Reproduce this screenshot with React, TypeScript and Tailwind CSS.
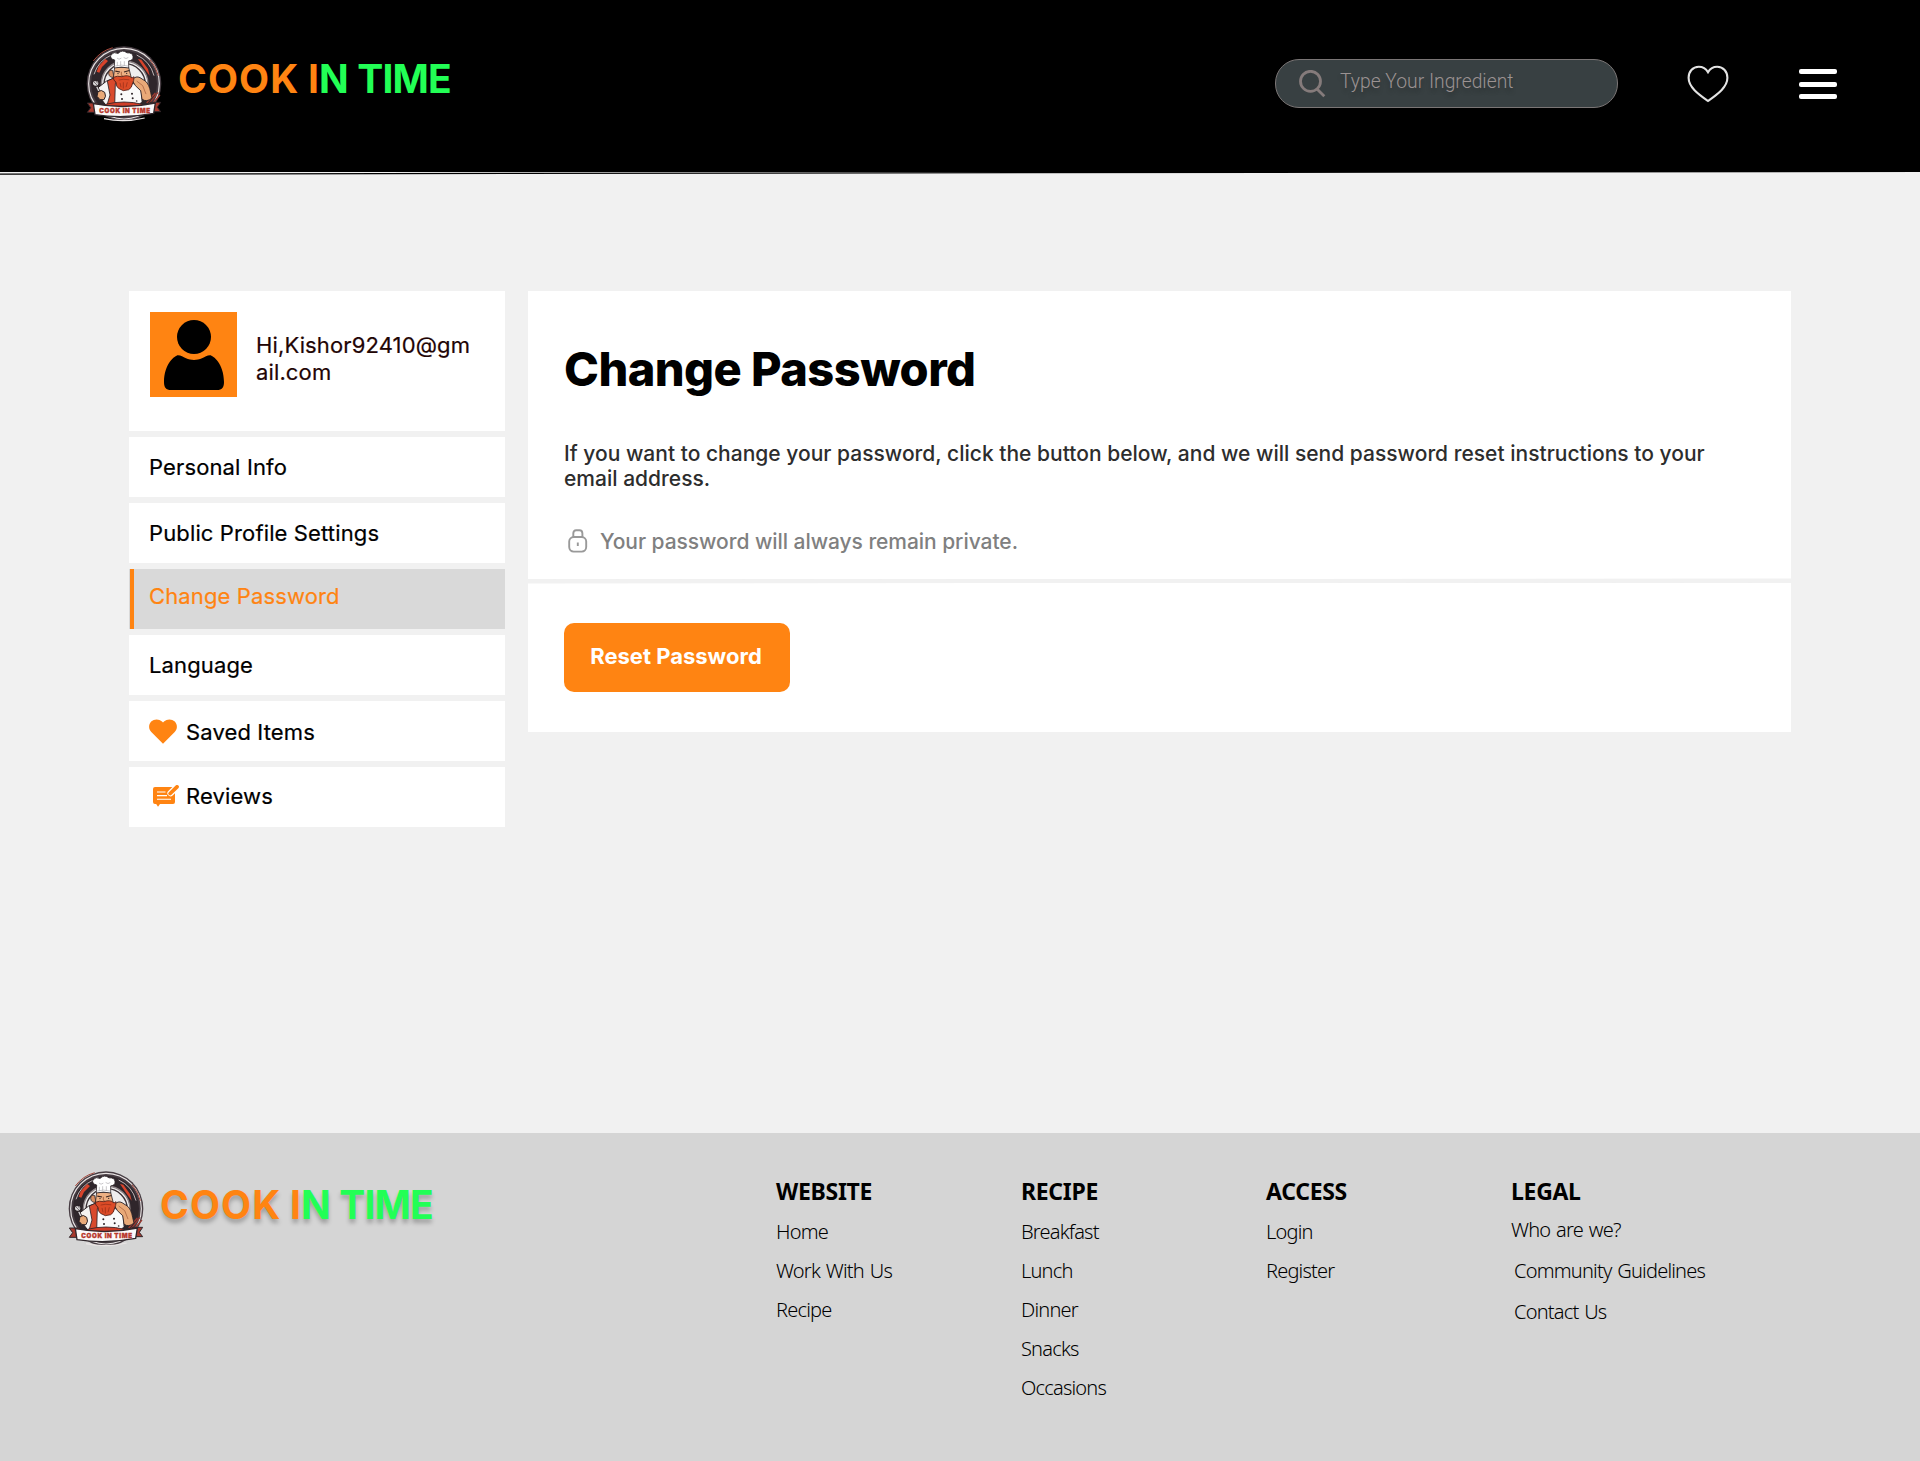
import type { ReactNode } from "react";

function ChefLogo({ className }: { className: string }) {
  return (
    <svg viewBox="0 0 252 264" className={`h-[88px] w-[84px] shrink-0 ${className}`} aria-hidden="true">
      {/* badge rings */}
      <circle cx="126" cy="128" r="112" fill="#463c42" />
      <circle cx="126" cy="128" r="106" fill="none" stroke="#e9e4e4" strokeWidth="3.5" />
      <circle cx="126" cy="128" r="99" fill="#2f262b" />
      <path d="M36 100A94 94 0 0 1 88 42" fill="none" stroke="#bfb4b6" strokeWidth="3" />
      <path d="M164 42A94 94 0 0 1 216 104" fill="none" stroke="#bfb4b6" strokeWidth="3" />
      <circle cx="128" cy="130" r="70" fill="#efeeee" />
      <circle cx="128" cy="130" r="70" fill="none" stroke="#8d8386" strokeWidth="4" />
      <circle cx="128" cy="130" r="62" fill="none" stroke="#3a3035" strokeWidth="4" />
      <path d="M44 92L50 76L70 54L78 60L60 78L52 95Z" fill="#d8432b" />
      <path d="M168 54L178 56L198 84L203 104L190 86Z" fill="#d8432b" />
      <path d="M34 60Q56 30 92 20" fill="none" stroke="#a5483c" strokeWidth="3" />
      <path d="M204 56Q222 76 229 104" fill="none" stroke="#a5483c" strokeWidth="3" />
      {/* forks on the right rim */}
      <path d="M200 190L228 154M206 194L234 162M194 186L220 156" fill="none" stroke="#9c3a30" strokeWidth="4" />
      {/* jacket */}
      <g transform="translate(0 12)">
        <path d="M48 128L74 108L100 98L112 186L74 184L56 160Z" fill="#f5f3f2" stroke="#2b2226" strokeWidth="3" />
        <path d="M76 108L102 96L108 184H74L84 150Z" fill="#d94a2d" stroke="#2b2226" strokeWidth="2.5" />
        <path d="M100 116L158 116L178 138L180 170L166 184H98Z" fill="#fafafa" stroke="#2b2226" strokeWidth="2.5" />
      </g>
      {/* raised arm */}
      <g transform="translate(0 42) scale(1 .85)">
        <path d="M150 88Q162 72 174 80L190 92Q202 104 206 132L210 152Q194 168 180 156L176 126L160 108Z" fill="#e9a978" stroke="#2b2226" strokeWidth="3" />
        <path d="M164 92L182 108L192 138" fill="none" stroke="#a8623e" strokeWidth="2.5" />
      </g>
      <g transform="translate(0 29) scale(1 .93)">
        {/* face */}
        <path d="M92 64Q80 60 80 74Q82 88 96 86Z" fill="#d98f62" stroke="#2b2226" strokeWidth="2.5" />
        <path d="M98 54H140L148 88L134 106H104L94 88Z" fill="#edb083" stroke="#2b2226" strokeWidth="2.5" />
        <path d="M100 66L114 69M126 69L142 64" stroke="#3a2420" strokeWidth="3.5" />
        <path d="M118 68V80L124 82" fill="none" stroke="#a8623e" strokeWidth="3" />
        <circle cx="108" cy="74" r="2" fill="#2b2226" />
        <circle cx="134" cy="73" r="2" fill="#2b2226" />
        {/* beard */}
        <path d="M94 86Q106 80 120 84Q138 76 150 88L156 84Q156 98 152 104Q150 120 140 126L124 129L110 122Q102 116 102 102Q94 96 94 86Z" fill="#dc4b27" stroke="#4a1d18" strokeWidth="2.5" />
        <path d="M110 95Q122 90 142 94M114 104L117 118M124 102V122M136 102L132 118" fill="none" stroke="#8c2a18" strokeWidth="2" />
        {/* chef hat */}
        <path d="M98 30Q82 26 87 13Q96 2 108 9Q121 -5 135 7Q152 6 153 19Q155 31 140 33L140 56Q118 50 97 56Z" fill="#fff" stroke="#2b2226" strokeWidth="2.5" />
        <path d="M106 36V50M116 34V49M127 34V49M97 50Q118 43 140 50M105 24Q111 31 118 24M125 22Q132 29 139 22" fill="none" stroke="#aba7ac" strokeWidth="2" />
      </g>
      {/* buttons */}
      <g fill="#2b2226">
        <circle cx="118" cy="160" r="3" />
        <circle cx="150" cy="158" r="3" />
        <circle cx="120" cy="174" r="3" />
        <circle cx="152" cy="172" r="3" />
        <circle cx="164" cy="180" r="2.5" />
      </g>
      {/* spoon hand */}
      <path d="M42 132L54 158" stroke="#2b2226" strokeWidth="8" />
      <path d="M42 132L54 158" stroke="#d9d6d7" strokeWidth="4" />
      <ellipse cx="41" cy="127" rx="10" ry="9" fill="#d9d6d7" stroke="#2b2226" strokeWidth="4" />
      <path d="M35 122L45 132M41 119L47 127" stroke="#4a4146" strokeWidth="2" />
      <path d="M48 152Q58 144 68 154Q74 166 66 176L54 176L45 166Z" fill="#e9a978" stroke="#2b2226" strokeWidth="3" />
      <path d="M70 190Q126 176 182 190L176 204H72Z" fill="#cf3d27" stroke="#2b2226" strokeWidth="2.5" />
      {/* ribbon */}
      <path d="M16 186H48V214H16L26 200Z" fill="#a8392d" stroke="#2f262b" strokeWidth="3" />
      <path d="M236 184H204V212H236L226 199Z" fill="#a8392d" stroke="#2f262b" strokeWidth="3" />
      <path d="M34 188Q126 206 220 186L215 217Q126 234 39 221Z" fill="#fbfafa" stroke="#2f262b" strokeWidth="4" />
      <path d="M66 233Q126 246 188 231" fill="none" stroke="#e9e4e4" strokeWidth="3.5" />
      <text
        x="128"
        y="215"
        textAnchor="middle"
        textLength="152"
        lengthAdjust="spacing"
        fill="#b8382c"
        stroke="#b8382c"
        strokeWidth="1"
        className="font-['Inter'] text-[18.5px] font-black"
      >
        COOK IN TIME
      </text>
    </svg>
  );
}

function Wordmark({ className }: { className: string }) {
  return (
    <div className={`text-[39px] leading-[48px] font-bold whitespace-nowrap ${className}`}>
      <span className="tracking-[1.1px] text-[#ff8412] [word-spacing:-1.7px]">COOK </span>
      <span className="text-[#ff8412]">I</span>
      <span className="tracking-[-0.8px] text-[#22ff55] [word-spacing:0.8px]">N TIME</span>
    </div>
  );
}

function MenuRow({ children }: { children: ReactNode }) {
  return <li className="flex h-[60px] items-center bg-white pl-[20px] text-black">{children}</li>;
}

const linkClass = "block leading-[39px]";

function FooterColumn({ title, children }: { title: string; children: ReactNode }) {
  return (
    <div className="w-[245px]">
      <h2 className="mb-[5.5px] text-[23px] leading-[30px] font-bold tracking-[-0.3px]">{title}</h2>
      <div className="text-[20px] font-light tracking-[-0.8px] whitespace-nowrap [word-spacing:1.4px]">{children}</div>
    </div>
  );
}

function Links({ items }: { items: string[] }) {
  return (
    <>
      {items.map((item) => (
        <a key={item} className={linkClass}>
          {item}
        </a>
      ))}
    </>
  );
}

export default function App() {
  return (
    <div className="flex h-[1461px] w-[1920px] flex-col overflow-hidden bg-[#f1f1f1] font-['Inter',sans-serif]">
      <header className="relative flex h-[172px] shrink-0 items-start bg-black">
        <ChefLogo className="mt-[41px] ml-[82px]" />
        <Wordmark className="mt-[55px] ml-[12px]" />
        <div className="mt-[59px] mr-[69px] ml-auto flex h-[49px] w-[343px] items-center rounded-[24px] border border-[#7a7575] bg-[#384042] pl-[23px]">
          <svg viewBox="0 0 27 28" className="h-[28px] w-[27px]" fill="none" stroke="#857b7b" strokeWidth="2.8">
            <circle cx="11.5" cy="11.3" r="10" />
            <path d="M18 19L25.3 26.3" />
          </svg>
          <span className="mb-[2px] ml-[14px] font-['Roboto'] text-[19.3px] font-light text-[#9b9292] [text-shadow:0_4px_4px_rgba(0,0,0,0.25)]">
            Type Your Ingredient
          </span>
        </div>
        <svg viewBox="0 0 42 38" className="mt-[65px] mr-[70px] h-[38px] w-[42px]" fill="none" stroke="#e3e3e3" strokeWidth="2.1">
          <path d="M21 7.2C18.8 3.5 15.6 1.8 11.8 1.8C5.6 1.8 1.6 6.6 1.6 12.8C1.6 22.3 11.5 29.2 21 36C30.5 29.2 40.4 22.3 40.4 12.8C40.4 6.6 36.4 1.8 30.2 1.8C26.4 1.8 23.2 3.5 21 7.2Z" />
        </svg>
        <div className="mt-[69px] mr-[83px] flex w-[38px] flex-col gap-[7.4px]">
          <div className="h-[5.2px] rounded-[2px] bg-white" />
          <div className="h-[5.2px] rounded-[2px] bg-white" />
          <div className="h-[5.2px] rounded-[2px] bg-white" />
        </div>
        <svg viewBox="0 0 1920 6" className="absolute top-[170px] left-0 h-[6px] w-[1920px]">
          <path d="M0 4.2L1920 1.4" stroke="black" strokeWidth="1.2" />
        </svg>
      </header>

      <main className="flex grow items-start gap-[23px] pt-[119px] pl-[129px]">
        <aside className="w-[376px] text-[22px] font-normal tracking-[0.13px] [-webkit-text-stroke:0.2px]">
          <div className="flex h-[140px] bg-white pt-[21px] pl-[21px]">
            <div className="h-[85px] w-[87px] shrink-0 bg-[#ff8412]">
              <svg viewBox="0 0 87 85" className="h-[85px] w-[87px]" fill="black">
                <circle cx="44" cy="25" r="17" />
                <path d="M28 43.3C31 43.3 33 45 36 46.3C41 48.4 47 48.4 52 46.3C55 45 57 43.3 60 43.3C63 43.3 74 52 74 70C74 75.5 72 78 67 78H21C16 78 14 75.5 14 70C14 52 25 43.3 28 43.3Z" />
              </svg>
            </div>
            <p className="mt-[20px] ml-[19px] w-[222px] leading-[27px] break-all text-[#1f0505]">Hi,Kishor92410@gmail.com</p>
          </div>
          <ul className="mt-[6px] flex flex-col gap-[6px]">
            <MenuRow>Personal Info</MenuRow>
            <MenuRow>Public Profile Settings</MenuRow>
            <li className="flex h-[60px] bg-[#d9d9d9] pl-px text-[#ff8412]">
              <span className="h-full w-[4px] bg-[#ff8412]" />
              <span className="ml-[15px] h-[54px] leading-[54px]">Change Password</span>
            </li>
            <MenuRow>Language</MenuRow>
            <MenuRow>
              <svg viewBox="0 0 28 25" className="mr-[9px] h-[25px] w-[28px]" fill="#ff8412">
                <path d="M14 24.8L2.3 13C-.6 10-.6 5.5 2.2 2.6C5.2-.3 10-.3 13 2.6L14 3.6L15 2.6C18-.3 22.8-.3 25.8 2.6C28.6 5.5 28.6 10 25.7 13Z" />
              </svg>
              <span className="mt-[2px]">Saved Items</span>
            </MenuRow>
            <MenuRow>
              <svg viewBox="0 0 26 22" className="mr-[7px] mb-[2px] ml-[4px] h-[22px] w-[26px]">
                <path d="M2 2H20Q22 2 22 4V17Q22 19 20 19H7L5 21.8L3.2 19H2Q0 19 0 17V4Q0 2 2 2Z" fill="#ff8412" />
                <path d="M4 7H12.5M4 10.6H14M4 14.3H18" stroke="white" strokeWidth="1.1" />
                <path d="M17.5 8.2L24 1.8" stroke="white" strokeWidth="6.2" strokeLinecap="round" />
                <path d="M17.2 8.5L24 1.9" stroke="#ff8412" strokeWidth="3.8" strokeLinecap="round" />
              </svg>
              <span className="mb-[2px]">Reviews</span>
            </MenuRow>
          </ul>
        </aside>

        <section className="w-[1263px]">
          <div className="h-[288px] bg-white pt-[49px] pl-[36px]">
            <h1 className="text-[47px] leading-[58px] font-extrabold tracking-[-0.55px] text-black">Change Password</h1>
            <p className="mt-[43px] w-[1160px] text-[21px] leading-[25px] font-medium tracking-[0.01px] text-[#2d2d2d]">
              If you want to change your password, click the button below, and we will send password reset instructions to
              your email address.
            </p>
            <div className="mt-[38px] flex items-start text-[21px] leading-[25px] font-medium text-[#808080]">
              <svg viewBox="0 0 20 24" className="ml-[4px] h-[24px] w-[20px]" fill="none" stroke="#999999" strokeWidth="1.9">
                <rect x="1.2" y="8" width="17" height="14.6" rx="4.5" />
                <path d="M5.3 8V4.6Q5.3 1.3 8.2 1.3H11.5Q14.4 1.3 14.4 4.6V8M9.8 13.5V17" />
              </svg>
              <span className="ml-[12px] tracking-[-0.05px]">Your password will always remain private.</span>
            </div>
          </div>
          <div className="h-[4px] -rotate-[0.045deg] bg-[#f1f1f1]" />
          <div className="h-[149px] bg-white pt-[40px] pl-[36px]">
            <button className="block h-[69px] w-[226px] rounded-[10px] bg-[#ff8412] pr-[2px] pb-[3px] text-[22px] font-bold text-white">
              Reset Password
            </button>
          </div>
        </section>
      </main>

      <footer className="flex h-[328px] shrink-0 items-start bg-[#d5d5d5]">
        <ChefLogo className="mt-[33px] ml-[64px]" />
        <Wordmark className="mt-[48px] ml-[12px] w-[616px] [text-shadow:0_4px_4px_rgba(0,0,0,0.25)]" />
        <nav className="mt-[43px] flex font-['Noto_Sans',sans-serif] text-black">
          <FooterColumn title="WEBSITE">
            <Links items={["Home", "Work With Us", "Recipe"]} />
          </FooterColumn>
          <FooterColumn title="RECIPE">
            <Links items={["Breakfast", "Lunch", "Dinner", "Snacks", "Occasions"]} />
          </FooterColumn>
          <FooterColumn title="ACCESS">
            <Links items={["Login", "Register"]} />
          </FooterColumn>
          <FooterColumn title="LEGAL">
            <a className="-mt-[2px] block leading-[39px]">Who are we?</a>
            <a className="mt-[2px] ml-[3px] block leading-[39px]">Community Guidelines</a>
            <a className="mt-[2px] ml-[3px] block leading-[39px]">Contact Us</a>
          </FooterColumn>
        </nav>
      </footer>
    </div>
  );
}
